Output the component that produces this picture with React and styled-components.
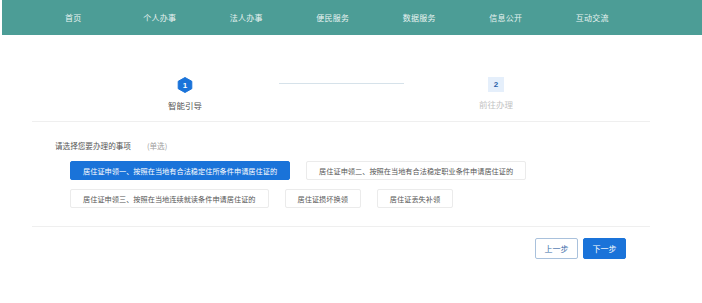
import React, { useState } from "react";
import styled, { createGlobalStyle } from "styled-components";

const GlobalStyle = createGlobalStyle`
  * { box-sizing: border-box; }
  body {
    margin: 0;
    background: #fff;
    font-family: "Noto Sans CJK SC", "Noto Sans", sans-serif;
  }
`;

const navItems = ["首页", "个人办事", "法人办事", "便民服务", "数据服务", "信息公开", "互动交流"];

const options = [
  "居住证申领一、按照在当地有合法稳定住所条件申请居住证的",
  "居住证申领二、按照在当地有合法稳定职业条件申请居住证的",
  "居住证申领三、按照在当地连续就读条件申请居住证的",
  "居住证损坏换领",
  "居住证丢失补领",
];

export default function App() {
  const [picked, setPicked] = useState(0);

  return (
    <>
      <GlobalStyle />
      <Nav>
        {navItems.map((n) => (
          <NavItem key={n}>{n}</NavItem>
        ))}
      </Nav>

      <Main>
        <Steps>
          <Step>
            <HexIcon>
              <svg width="16" height="16" viewBox="0 0 16 16">
                <polygon points="8,0.5 14.8,4.3 14.8,11.7 8,15.5 1.2,11.7 1.2,4.3" fill="#1a73d9" stroke="#1a73d9" strokeWidth="1" strokeLinejoin="round" />
              </svg>
              <span>1</span>
            </HexIcon>
            <StepLabel $active>智能引导</StepLabel>
          </Step>
          <StepLine />
          <Step>
            <NumBox>2</NumBox>
            <StepLabel>前往办理</StepLabel>
          </Step>
        </Steps>

        <Divider />

        <Title>
          请选择您要办理的事项<Hint>(单选)</Hint>
        </Title>

        <Options>
          {options.map((o, i) => (
            <Option key={o} $active={picked === i} onClick={() => setPicked(i)}>
              {o}
            </Option>
          ))}
        </Options>

        <Divider $gap={18} />

        <Footer>
          <Btn>上一步</Btn>
          <Btn $primary>下一步</Btn>
        </Footer>
      </Main>
    </>
  );
}

const Nav = styled.nav`
  display: flex;
  align-items: center;
  height: 35px;
  margin-left: 2px;
  padding-left: 28px;
  background: #4c9d96;
`;

const NavItem = styled.a`
  width: 86.5px;
  text-align: center;
  color: #e8f3f1;
  font-size: 8px;
  letter-spacing: 0.2px;
`;

const Main = styled.div`
  width: 618px;
  margin-left: 32px;
`;

const Steps = styled.div`
  display: flex;
  align-items: flex-start;
  padding: 42px 0 0 123px;
`;

const Step = styled.div`
  width: 60px;
  display: flex;
  flex-direction: column;
  align-items: center;
`;

const HexIcon = styled.div`
  position: relative;
  width: 16px;
  height: 16px;

  svg {
    display: block;
  }
  span {
    position: absolute;
    inset: 0;
    display: flex;
    align-items: center;
    justify-content: center;
    color: #fff;
    font-size: 8px;
    font-weight: 700;
    font-family: "Liberation Sans", sans-serif;
  }
`;

const NumBox = styled.div`
  width: 16px;
  height: 15px;
  display: flex;
  align-items: center;
  justify-content: center;
  background: #e5effb;
  color: #2a5fa8;
  font-size: 8px;
  font-weight: 700;
  font-family: "Liberation Sans", sans-serif;
`;

const StepLabel = styled.div`
  margin-top: 7px;
  font-size: 8.5px;
  line-height: 10px;
  color: ${(p) => (p.$active ? "#555" : "#c2c2c2")};
`;

const StepLine = styled.div`
  width: 125px;
  height: 1px;
  margin: 6px 62px 0 64px;
  background: #d6e2ea;
`;

const Divider = styled.div`
  height: 1px;
  background: #efefef;
  margin-top: ${(p) => p.$gap ?? 11}px;
`;

const Title = styled.div`
  margin: 19px 0 0 23px;
  font-size: 7.6px;
  line-height: 10px;
  color: #555;
`;

const Hint = styled.span`
  margin-left: 16px;
  color: #a0a0a0;
`;

const Options = styled.div`
  display: flex;
  flex-wrap: wrap;
  gap: 9px 16px;
  max-width: 480px;
  margin: 10px 0 0 38px;
`;

const Option = styled.button`
  height: 19px;
  padding: 0 12px;
  border: 1px solid ${(p) => (p.$active ? "#1a73d9" : "#ebebeb")};
  border-radius: 2px;
  background: ${(p) => (p.$active ? "#1a73d9" : "#fff")};
  color: ${(p) => (p.$active ? "#fff" : "#555")};
  font-family: inherit;
  font-size: 7.2px;
  cursor: pointer;
`;

const Footer = styled.div`
  display: flex;
  justify-content: flex-end;
  gap: 5px;
  margin-top: 11px;
  padding-right: 24px;
`;

const Btn = styled.button`
  width: 43px;
  height: 21px;
  border-radius: 2px;
  border: 1px solid ${(p) => (p.$primary ? "#1a73d9" : "#a9c1dc")};
  background: ${(p) => (p.$primary ? "#1a73d9" : "#fff")};
  color: ${(p) => (p.$primary ? "#fff" : "#3d6ea8")};
  font-family: inherit;
  font-size: 8px;
  cursor: pointer;
`;
